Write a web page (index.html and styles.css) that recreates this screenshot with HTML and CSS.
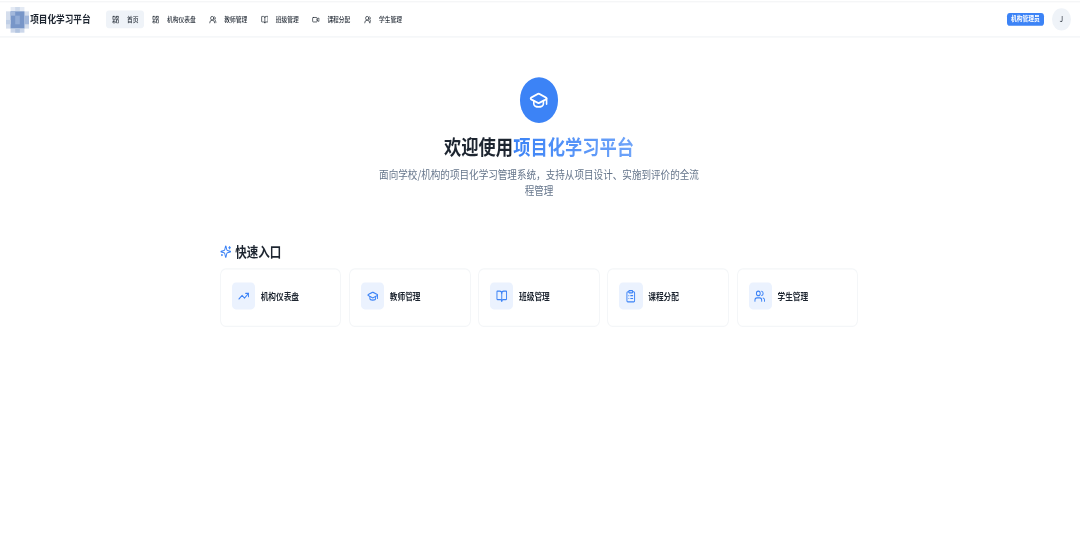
FILE: index.html
```html
<!DOCTYPE html>
<html lang="zh-CN">
<head>
  <meta charset="UTF-8">
  <meta name="viewport" content="width=device-width, initial-scale=1">
  <title>项目化学习平台</title>
  <link rel="stylesheet" href="styles.css">
</head>
<body>
  <!-- Shared icons -->
  <svg class="hidden">
    <symbol id="icon-dashboard" viewBox="0 0 24 24"><rect x="3" y="3" width="7" height="9" rx="1"/><rect x="14" y="3" width="7" height="5" rx="1"/><rect x="14" y="12" width="7" height="9" rx="1"/><rect x="3" y="16" width="7" height="5" rx="1"/></symbol>
    <symbol id="icon-users" viewBox="0 0 24 24"><path d="M18 21a8 8 0 0 0-16 0"/><circle cx="10" cy="8" r="5"/><path d="M22 20c0-3.37-2-6.5-4-8a5 5 0 0 0-.45-8.3"/></symbol>
    <symbol id="icon-book" viewBox="0 0 24 24"><path d="M12 7v14"/><path d="M3 18a1 1 0 0 1-1-1V4a1 1 0 0 1 1-1h5a4 4 0 0 1 4 4 4 4 0 0 1 4-4h5a1 1 0 0 1 1 1v13a1 1 0 0 1-1 1h-6a3 3 0 0 0-3 3 3 3 0 0 0-3-3z"/></symbol>
    <symbol id="icon-video" viewBox="0 0 24 24"><path d="m16 13 5.2 3.5a.5.5 0 0 0 .8-.4V7.9a.5.5 0 0 0-.8-.4L16 10.500"/><rect x="2" y="6" width="14" height="12" rx="2"/></symbol>
    <symbol id="icon-cap" viewBox="0 0 24 24"><path d="M21.420 10.922a1 1 0 0 0-.019-1.838L12.830 5.180a2 2 0 0 0-1.660 0L2.600 9.080a1 1 0 0 0 0 1.832l8.570 3.908a2 2 0 0 0 1.660 0z"/><path d="M22 10v6"/><path d="M6 12.500V16a6 3 0 0 0 12 0v-3.500"/></symbol>
    <symbol id="icon-trend" viewBox="0 0 24 24"><path d="m22 7-8.500 8.500-5-5L2 17"/><path d="M16 7h6v6"/></symbol>
    <symbol id="icon-clipboard" viewBox="0 0 24 24"><rect x="8" y="2" width="8" height="4" rx="1"/><path d="M16 4h2a2 2 0 0 1 2 2v14a2 2 0 0 1-2 2H6a2 2 0 0 1-2-2V6a2 2 0 0 1 2-2h2"/><path d="M12 11h4"/><path d="M12 16h4"/><path d="M8 11h.01"/><path d="M8 16h.01"/></symbol>
    <symbol id="icon-people" viewBox="0 0 24 24"><path d="M16 21v-2a4 4 0 0 0-4-4H6a4 4 0 0 0-4 4v2"/><circle cx="9" cy="7" r="4"/><path d="M22 21v-2a4 4 0 0 0-3-3.870"/><path d="M16 3.130a4 4 0 0 1 0 7.750"/></symbol>
    <symbol id="icon-sparkles" viewBox="0 0 24 24"><path d="M9.937 15.500A2 2 0 0 0 8.500 14.063l-6.135-1.582a.5.5 0 0 1 0-.962L8.500 9.936A2 2 0 0 0 9.937 8.500l1.582-6.135a.5.5 0 0 1 .963 0L14.063 8.500A2 2 0 0 0 15.500 9.937l6.135 1.581a.5.5 0 0 1 0 .964L15.500 14.063a2 2 0 0 0-1.437 1.437l-1.582 6.135a.5.5 0 0 1-.963 0z"/><path d="M20 3v4"/><path d="M22 5h-4"/><path d="M4 17v2"/><path d="M5 18H3"/></symbol>
  </svg>

  <div class="page">
    <header class="header">
      <svg class="logo" viewBox="0 0 5 6" preserveAspectRatio="none">
        <rect x="1" y="0" width="3" height="1" fill="#e4eaf4"/>
        <rect x="2" y="0" width="1" height="1" fill="#cfdaeb"/>
        <rect x="0" y="1" width="5" height="4" fill="#d5deed"/>
        <rect x="1" y="1" width="3" height="4" fill="#7896c8"/>
        <rect x="4" y="2" width="1" height="2" fill="#a3b8db"/>
        <rect x="1" y="1" width="1" height="1" fill="#a3b8db"/>
        <rect x="2" y="2" width="1" height="2" fill="#92acd6"/>
        <rect x="0" y="3" width="1" height="1" fill="#c0cfe6"/>
        <rect x="1" y="5" width="3" height="1" fill="#ccd7ea"/>
        <rect x="2" y="5" width="1" height="1" fill="#b2c4e0"/>
      </svg>
      <span class="brand">项目化学习平台</span>
      <nav class="nav">
        <a class="nav-item active"><svg class="icon"><use href="#icon-dashboard"/></svg>首页</a>
        <a class="nav-item"><svg class="icon"><use href="#icon-dashboard"/></svg>机构仪表盘</a>
        <a class="nav-item"><svg class="icon"><use href="#icon-users"/></svg>教师管理</a>
        <a class="nav-item"><svg class="icon"><use href="#icon-book"/></svg>班级管理</a>
        <a class="nav-item"><svg class="icon"><use href="#icon-video"/></svg>课程分配</a>
        <a class="nav-item"><svg class="icon"><use href="#icon-users"/></svg>学生管理</a>
      </nav>
      <span class="badge">机构管理员</span>
      <span class="avatar">J</span>
    </header>

    <main class="main">
      <section class="hero">
        <div class="hero-icon"><svg class="icon"><use href="#icon-cap"/></svg></div>
        <h1>欢迎使用<span class="gradient">项目化学习平台</span></h1>
        <p>面向学校/机构的项目化学习管理系统，支持从项目设计、实施到评价的全流程管理</p>
      </section>

      <h2><svg class="icon"><use href="#icon-sparkles"/></svg>快速入口</h2>
      <div class="cards">
        <a class="card"><span class="card-icon"><svg class="icon"><use href="#icon-trend"/></svg></span>机构仪表盘</a>
        <a class="card"><span class="card-icon"><svg class="icon"><use href="#icon-cap"/></svg></span>教师管理</a>
        <a class="card"><span class="card-icon"><svg class="icon"><use href="#icon-book"/></svg></span>班级管理</a>
        <a class="card"><span class="card-icon"><svg class="icon"><use href="#icon-clipboard"/></svg></span>课程分配</a>
        <a class="card"><span class="card-icon"><svg class="icon"><use href="#icon-people"/></svg></span>学生管理</a>
      </div>
    </main>
  </div>
</body>
</html>
```
FILE: styles.css
```css
* {
  box-sizing: border-box;
}

body {
  margin: 0;
  background-color: #fff;
  color: #1d2530;
  font-family: "Noto Sans CJK SC", sans-serif;
}

.hidden {
  display: none;
}

/* the layout is 2250px wide, zoomed out to the window and stretched a bit in height */
.page {
  zoom: 0.48;
  width: 2250px;
  height: 960px;
  padding-top: 2px;
  transform: scaleY(1.171875);
  transform-origin: 0 0;
}

.icon {
  flex: none;
  width: 24px;
  height: 24px;
  fill: none;
  stroke: currentColor;
  stroke-width: 2;
  stroke-linecap: round;
  stroke-linejoin: round;
}

.header {
  display: flex;
  align-items: center;
  height: 65px;
  padding: 0 19px 0 12px;
  border-top: 2px solid #f3f4f6;
  border-bottom: 2px solid #f1f3f6;
}

.logo {
  width: 48px;
  height: 46px;
  margin-right: 3px;
}

.brand {
  padding-bottom: 3px;
  font-size: 18px;
  font-weight: 700;
}

.nav {
  display: flex;
  gap: 3.5px;
  margin-left: 32px;
}

.nav-item {
  display: flex;
  align-items: center;
  gap: 16px;
  height: 32px;
  padding: 0 12px;
  border-radius: 6px;
  font-size: 12px;
  font-weight: 500;
}

.nav-item .icon {
  width: 16px;
  height: 16px;
}

.nav-item.active {
  background-color: #eff3f8;
}

.badge {
  margin-left: auto;
  padding: 0 9px;
  border-radius: 6px;
  background-color: #3c83f6;
  color: #fff;
  font-size: 12px;
  font-weight: 600;
  line-height: 22px;
}

.avatar {
  width: 40px;
  margin-left: 16px;
  border-radius: 50%;
  background-color: #eff3f8;
  font-size: 14px;
  line-height: 40px;
  text-align: center;
}

.main {
  width: 1330px;
  margin: 0 0 0 458px;
  padding-top: 71px;
}

.hero {
  text-align: center;
}

.hero-icon {
  display: flex;
  align-items: center;
  justify-content: center;
  width: 80px;
  height: 80px;
  margin: 0 auto 22px;
  border-radius: 50%;
  background-color: #3c83f6;
  color: #fff;
}

.hero-icon .icon {
  width: 40px;
  height: 40px;
}

h1 {
  margin: 0 0 17px;
  font-size: 36px;
  font-weight: 700;
  line-height: 40px;
}

.gradient {
  background: linear-gradient(to right, #3c83f6, #6fa4f9);
  -webkit-background-clip: text;
  background-clip: text;
  color: transparent;
}

.hero p {
  width: 672px;
  margin: 0 auto;
  color: #65758b;
  font-size: 20px;
  line-height: 29px;
}

h2 {
  display: flex;
  align-items: center;
  gap: 8px;
  margin: 77px 0 14px;
  font-size: 24px;
  font-weight: 600;
  line-height: 32px;
}

h2 .icon {
  color: #3c83f6;
}

.cards {
  display: grid;
  grid-template-columns: repeat(5, 1fr);
  gap: 16px;
}

.card {
  display: flex;
  gap: 12px;
  height: 104px;
  padding: 23px;
  border: 2px solid #f4f6f8;
  border-radius: 12px;
  font-size: 16px;
  font-weight: 600;
  line-height: 48px;
}

.card-icon {
  display: flex;
  align-items: center;
  justify-content: center;
  width: 48px;
  height: 48px;
  border-radius: 8px;
  background-color: #ebf2fe;
  color: #3c83f6;
}
```
